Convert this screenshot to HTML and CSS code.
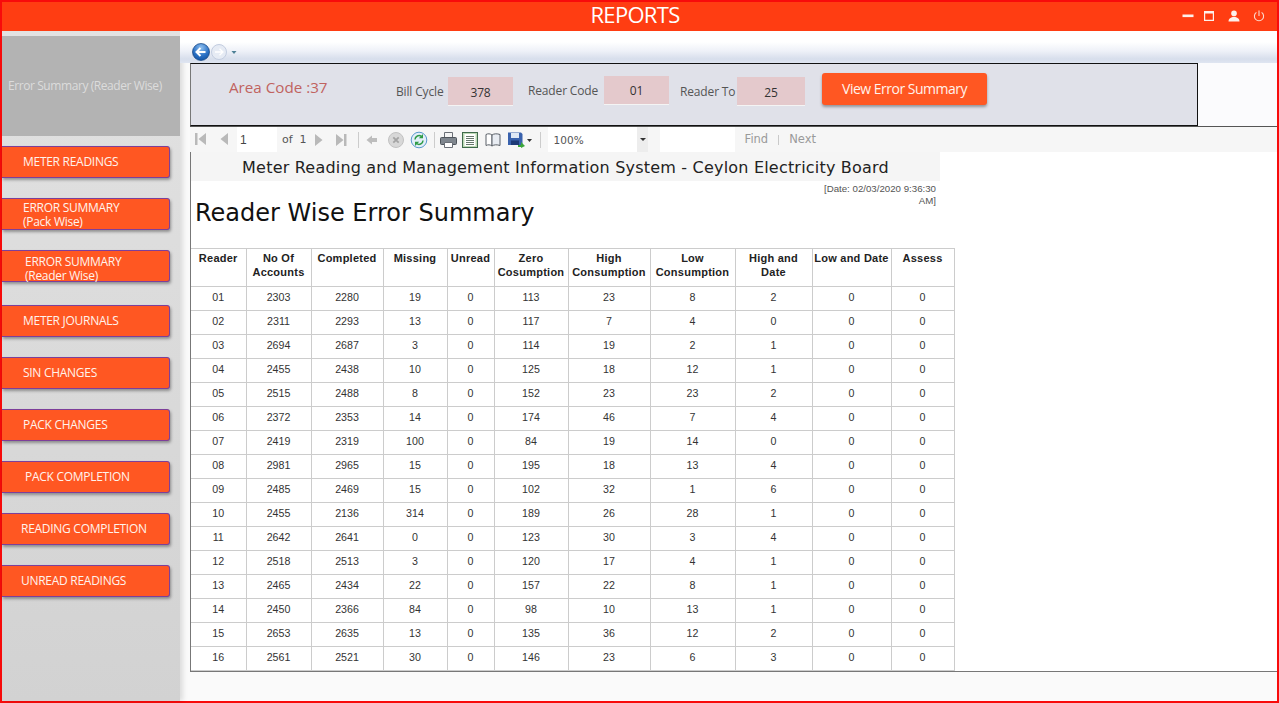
FILE: index.html
```html
<!DOCTYPE html>
<html>
<head>
    <title>Reports</title>
    <link rel="stylesheet" href="styles.css">
</head>
<body>
<div class="frame">
    <!-- Top bar -->
    <header class="topbar">
        <span class="topbar-title">REPORTS</span>
        <div class="window-icons">
            <svg width="12" height="12" viewBox="0 0 12 12"><rect x="0.500" y="4.500" width="11" height="2.600" fill="#fdf0ea"/></svg>
            <svg class="icon-max" width="12" height="12" viewBox="0 0 12 12"><path d="M1 1h10v10H1z M2.200 3.600v6.200h7.600V3.600z" fill="#fdf0ea" fill-rule="evenodd"/></svg>
            <svg width="12" height="12" viewBox="0 0 12 12"><circle cx="6" cy="3.400" r="2.800" fill="#fdf0ea"/><path d="M0.500 11.500c0-3 2.400-4.600 5.500-4.600s5.500 1.600 5.500 4.600z" fill="#fdf0ea"/></svg>
            <svg width="12" height="12" viewBox="0 0 12 12" fill="none" stroke="#fbd9cc" stroke-width="1.100"><path d="M3.400 2.400a4.600 4.600 0 1 0 5.200 0"/><path d="M6 0.500v5.500"/></svg>
        </div>
    </header>

    <div class="content">
        <!-- Left menu -->
        <aside class="sidebar">
            <div class="page-name">Error Summary (Reader Wise)</div>
            <nav class="menu">
                <a class="menu-btn">METER READINGS</a>
                <a class="menu-btn menu-two">ERROR SUMMARY<br>(Pack Wise)</a>
                <a class="menu-btn menu-two menu-low shift-2">ERROR SUMMARY<br>(Reader Wise)</a>
                <a class="menu-btn menu-journal">METER JOURNALS</a>
                <a class="menu-btn">SIN CHANGES</a>
                <a class="menu-btn">PACK CHANGES</a>
                <a class="menu-btn shift-2">PACK COMPLETION</a>
                <a class="menu-btn shift-n2">READING COMPLETION</a>
                <a class="menu-btn shift-n2">UNREAD READINGS</a>
            </nav>
        </aside>

        <main class="main">
            <!-- Browser style back / forward -->
            <div class="navbar">
                <svg width="46" height="20" viewBox="0 0 46 20">
                    <defs>
                        <radialGradient id="backFill" cx="50%" cy="25%" r="80%">
                            <stop offset="0" stop-color="#8fc0ef"/>
                            <stop offset="0.6" stop-color="#2a70c4"/>
                            <stop offset="1" stop-color="#0f4f9e"/>
                        </radialGradient>
                    </defs>
                    <circle cx="27" cy="10" r="7.500" fill="#e6ebf4" stroke="#c3cde0"/>
                    <path d="M23 10h8M27.500 6.800L31 10l-3.500 3.200" fill="none" stroke="#fff" stroke-width="1.300"/>
                    <circle cx="9" cy="10" r="8.500" fill="url(#backFill)" stroke="#12427f" stroke-width="0.700"/>
                    <path d="M4.500 10h9M8.500 6L4.500 10l4 4" fill="none" stroke="#fff" stroke-width="2"/>
                    <path d="M39.500 9h5l-2.500 3z" fill="#4d8096"/>
                </svg>
            </div>

            <!-- Filter panel -->
            <div class="filter-row">
                <form class="filter">
                    <span class="area-code">Area Code :37</span>
                    <label class="lbl lbl-bill">Bill Cycle</label>
                    <span class="box">378</span>
                    <label class="lbl lbl-code">Reader Code</label>
                    <span class="box box-code">01</span>
                    <label class="lbl lbl-to">Reader To</label>
                    <span class="box box-to">25</span>
                    <button type="button" class="view-btn">View Error Summary</button>
                </form>
            </div>

            <!-- Report viewer -->
            <div class="viewer">
                <div class="toolbar">
                    <svg class="tb-icons" width="160" height="16" viewBox="0 0 160 16">
                        <path d="M0 2h2.500v12H0zM11 2v12L3.500 8zM33 2v12L25.500 8z" fill="#b9b9b9"/>
                    </svg>
                    <input class="page-box" value="1">
                    <span class="of">of</span><span class="of-n">1</span>
                    <svg class="tb-next" width="36" height="16" viewBox="0 0 36 16">
                        <path d="M0 2v12l7.500-6zM21 2v12l7.500-6zM29 2h2.500v12H29z" fill="#b9b9b9"/>
                    </svg>
                    <i class="sep"></i>
                    <svg class="tb-arrow" width="12" height="12" viewBox="0 0 12 12"><path d="M0.500 6L6 1.500V4h5v4H6v2.500z" fill="#bdbdbd"/></svg>
                    <svg class="tb-stop" width="18" height="18" viewBox="0 0 18 18"><circle cx="9" cy="9" r="7.500" fill="#d8d8d8" stroke="#c2c2c2"/><path d="M6.300 6.300l5.400 5.400M11.700 6.300l-5.400 5.400" stroke="#a3a3a3" stroke-width="1.800"/></svg>
                    <svg class="tb-refresh" width="18" height="18" viewBox="0 0 18 18"><circle cx="9" cy="9" r="7.800" fill="#e2eef9" stroke="#5a98cc"/><path d="M5 8.500A4 4 0 0 1 11.500 5.500" fill="none" stroke="#2f9b46" stroke-width="1.500"/><path d="M13 3v4.200H8.800z" fill="#2f9b46"/><path d="M13 9.500A4 4 0 0 1 6.500 12.500" fill="none" stroke="#2f9b46" stroke-width="1.500"/><path d="M5 15v-4.200h4.200z" fill="#2f9b46"/></svg>
                    <i class="sep"></i>
                    <svg class="tb-print" width="17" height="16" viewBox="0 0 17 16"><path d="M4.500 0.500h8v5h-8z" fill="#f4f4f4" stroke="#6a6f76"/><rect x="0.500" y="5.500" width="16" height="7" rx="1" fill="#7f868e" stroke="#4f555c"/><path d="M4.500 10.500h8v5h-8z" fill="#fff" stroke="#6a6f76"/></svg>
                    <svg class="tb-page" width="16" height="16" viewBox="0 0 16 16"><rect x="0.500" y="0.500" width="15" height="15" fill="#bcd8b4" stroke="#3f6a4c"/><rect x="2.500" y="2" width="11" height="12" fill="#fff"/><path d="M4 4.500h8M4 6.500h8M4 8.500h8M4 10.500h8M4 12.500h8" stroke="#66786b"/></svg>
                    <svg class="tb-book" width="16" height="14" viewBox="0 0 16 14"><path d="M1 1.500c2-1 4-1 6 .5v11c-2-1.500-4-1.500-6-.5z" fill="#fff" stroke="#5b6168"/><path d="M7 2c2-1.500 5-1.500 8-.5v11c-3-1-6-1-8 .5z" fill="#e8ecf2" stroke="#5b6168"/></svg>
                    <svg class="tb-save" width="24" height="16" viewBox="0 0 24 16"><path d="M0 0.500h13l1.500 1.500v11H0z" fill="#3a62ad"/><rect x="3" y="1" width="8" height="5" fill="#dfe8f5"/><rect x="3" y="8.500" width="8" height="4.500" fill="#1d3a76"/><path d="M10 13h3v-3l4 4-4 2v-1h-3z" fill="#3ca63c"/><path d="M19 7h5l-2.500 3z" fill="#333"/></svg>
                    <i class="sep"></i>
                    <div class="zoom-box"><span>100%</span><b class="zoom-arrow"></b></div>
                    <input class="find-box">
                    <span class="find">Find</span><i class="find-sep"></i><span class="find">Next</span>
                </div>

                <div class="report">
                    <div class="report-head">Meter Reading and Management Information System - Ceylon Electricity Board</div>
                    <div class="report-date">[Date: 02/03/2020 9:36:30<br>AM]</div>
                    <h1 class="report-title">Reader Wise Error Summary</h1>

                    <table class="summary">
                        <colgroup>
                            <col class="c1"><col class="c2"><col class="c3"><col class="c4"><col class="c5"><col class="c6">
                            <col class="c7"><col class="c8"><col class="c9"><col class="c10"><col class="c11">
                        </colgroup>
                        <thead>
                            <tr>
                                <th>Reader</th>
                                <th>No Of Accounts</th>
                                <th>Completed</th>
                                <th>Missing</th>
                                <th>Unread</th>
                                <th>Zero Cosumption</th>
                                <th>High Consumption</th>
                                <th>Low Consumption</th>
                                <th>High and Date</th>
                                <th>Low and Date</th>
                                <th>Assess</th>
                            </tr>
                        </thead>
                        <tbody>
                            <tr><td>01</td><td>2303</td><td>2280</td><td>19</td><td>0</td><td>113</td><td>23</td><td>8</td><td>2</td><td>0</td><td>0</td></tr>
                            <tr><td>02</td><td>2311</td><td>2293</td><td>13</td><td>0</td><td>117</td><td>7</td><td>4</td><td>0</td><td>0</td><td>0</td></tr>
                            <tr><td>03</td><td>2694</td><td>2687</td><td>3</td><td>0</td><td>114</td><td>19</td><td>2</td><td>1</td><td>0</td><td>0</td></tr>
                            <tr><td>04</td><td>2455</td><td>2438</td><td>10</td><td>0</td><td>125</td><td>18</td><td>12</td><td>1</td><td>0</td><td>0</td></tr>
                            <tr><td>05</td><td>2515</td><td>2488</td><td>8</td><td>0</td><td>152</td><td>23</td><td>23</td><td>2</td><td>0</td><td>0</td></tr>
                            <tr><td>06</td><td>2372</td><td>2353</td><td>14</td><td>0</td><td>174</td><td>46</td><td>7</td><td>4</td><td>0</td><td>0</td></tr>
                            <tr><td>07</td><td>2419</td><td>2319</td><td>100</td><td>0</td><td>84</td><td>19</td><td>14</td><td>0</td><td>0</td><td>0</td></tr>
                            <tr><td>08</td><td>2981</td><td>2965</td><td>15</td><td>0</td><td>195</td><td>18</td><td>13</td><td>4</td><td>0</td><td>0</td></tr>
                            <tr><td>09</td><td>2485</td><td>2469</td><td>15</td><td>0</td><td>102</td><td>32</td><td>1</td><td>6</td><td>0</td><td>0</td></tr>
                            <tr><td>10</td><td>2455</td><td>2136</td><td>314</td><td>0</td><td>189</td><td>26</td><td>28</td><td>1</td><td>0</td><td>0</td></tr>
                            <tr><td>11</td><td>2642</td><td>2641</td><td>0</td><td>0</td><td>123</td><td>30</td><td>3</td><td>4</td><td>0</td><td>0</td></tr>
                            <tr><td>12</td><td>2518</td><td>2513</td><td>3</td><td>0</td><td>120</td><td>17</td><td>4</td><td>1</td><td>0</td><td>0</td></tr>
                            <tr><td>13</td><td>2465</td><td>2434</td><td>22</td><td>0</td><td>157</td><td>22</td><td>8</td><td>1</td><td>0</td><td>0</td></tr>
                            <tr><td>14</td><td>2450</td><td>2366</td><td>84</td><td>0</td><td>98</td><td>10</td><td>13</td><td>1</td><td>0</td><td>0</td></tr>
                            <tr><td>15</td><td>2653</td><td>2635</td><td>13</td><td>0</td><td>135</td><td>36</td><td>12</td><td>2</td><td>0</td><td>0</td></tr>
                            <tr><td>16</td><td>2561</td><td>2521</td><td>30</td><td>0</td><td>146</td><td>23</td><td>6</td><td>3</td><td>0</td><td>0</td></tr>
                        </tbody>
                    </table>
                </div>
            </div>
        </main>
    </div>
</div>
</body>
</html>
```

FILE: styles.css
```css
* {
    box-sizing: border-box;
}

html, body {
    margin: 0;
    height: 100%;
    overflow: hidden;
}

body {
    font-family: "Open Sans", sans-serif;
}

.frame {
    height: 703px;
    border: 2px solid #f80b0b;
    display: flex;
    flex-direction: column;
    background-color: #fafafa;
}

/* Top bar */
.topbar {
    height: 29px;
    flex: none;
    background-color: #ff3d12;
    display: flex;
    align-items: center;
    justify-content: center;
    position: relative;
}

.topbar-title {
    color: #fff;
    font-size: 22px;
    letter-spacing: -0.7px;
    margin: -6px 9px 0 0;
}

.window-icons {
    position: absolute;
    right: 12px;
    top: 8px;
    display: flex;
    gap: 13px;
}

.window-icons svg {
    display: block;
}

.window-icons .icon-max {
    margin-left: -4px;
}

.content {
    flex: 1;
    display: flex;
    min-height: 0;
}

/* Left menu */
.sidebar {
    width: 178px;
    flex: none;
    padding-top: 5px;
    background: linear-gradient(#e2e2e2, #d2d2d2);
    box-shadow: 3px 0 5px rgba(0, 0, 0, 0.12);
}

.page-name {
    height: 100px;
    background-color: #b3b3b3;
    color: #dcdcdc;
    font-size: 12px;
    letter-spacing: -0.42px;
    display: flex;
    align-items: center;
    padding-left: 6px;
    padding-bottom: 1px;
    white-space: nowrap;
}

.menu {
    display: flex;
    flex-direction: column;
    gap: 20px;
    padding-top: 10px;
}

.menu-btn {
    display: block;
    width: 168px;
    height: 32px;
    padding-left: 21px;
    background-color: #ff5722;
    border: 1px solid #7d3f9a;
    border-left: none;
    border-radius: 0 3px 3px 0;
    box-shadow: 1px 2px 3px rgba(0, 0, 0, 0.35);
    color: #fff3ec;
    font-size: 12px;
    letter-spacing: -0.28px;
    line-height: 30px;
    white-space: nowrap;
}

.menu-two {
    line-height: 14px;
    padding-top: 2px;
}

.menu-low {
    padding-top: 4px;
}

.menu-journal {
    margin-top: 3px;
}

.shift-2 {
    padding-left: 23px;
}

.shift-n2 {
    padding-left: 19px;
}

/* Main area */
.main {
    flex: 1;
    min-width: 0;
    display: flex;
    flex-direction: column;
    padding-left: 10px;
}

.navbar {
    height: 32px;
    flex: none;
    margin-left: -10px;
    padding: 11px 0 0 12px;
    background: linear-gradient(#fff 0, #fff 11px, #eef1f8 20px, #d7deec 28px, #dfe5f1 32px);
}

.navbar svg {
    display: block;
}

.filter-row {
    height: 63px;
    flex: none;
    background-color: #fbfbfd;
}

.filter {
    width: 1008px;
    height: 63px;
    padding-bottom: 8px;
    background-color: #e0e1e9;
    border: 1px solid #111;
    border-left-color: #777;
    display: flex;
    align-items: center;
    color: #555;
    font-size: 12px;
    letter-spacing: -0.15px;
}

.area-code {
    width: 167px;
    margin-top: -8px;
    padding-left: 38px;
    color: #c0635f;
    font-size: 15.2px;
    letter-spacing: 0;
    white-space: nowrap;
}

.lbl {
    white-space: nowrap;
}

.lbl-bill {
    margin-top: 1px;
    margin-left: 38px;
    width: 52px;
}

.lbl-code {
    margin-left: 15px;
    width: 76px;
}

.lbl-to {
    margin-left: 11px;
    width: 57px;
    margin-top: 1px;
}

.box {
    width: 65px;
    height: 29px;
    margin-top: 1px;
    background-color: #e4c9cc;
    border-bottom: 1px solid #f4f4f4;
    color: #333;
    font-size: 12px;
    text-align: center;
    line-height: 31px;
}

.box-code {
    margin-top: -1px;
    line-height: 29px;
}

.box-to {
    width: 68px;
}

.view-btn {
    width: 165px;
    height: 32px;
    margin: -4px 0 0 17px;
    padding: 0;
    background-color: #ff5722;
    border: none;
    border-radius: 3px;
    box-shadow: 0 2px 3px rgba(0, 0, 0, 0.35);
    color: #fff3ec;
    font-family: "Open Sans", sans-serif;
    font-size: 14px;
    letter-spacing: -0.5px;
}

/* Report viewer */
.viewer {
    flex: 1;
    min-height: 0;
    display: flex;
    flex-direction: column;
    border-top: 1px solid #555;
}

.toolbar {
    height: 25px;
    flex: none;
    display: flex;
    align-items: center;
    background-color: #f6f6f6;
    padding-left: 5px;
    position: relative;
}

.toolbar svg {
    flex: none;
}

.tb-icons {
    position: absolute;
    left: 5px;
    top: 4px;
}

.page-box {
    width: 40px;
    height: 25px;
    margin-left: 42px;
    border: none;
    outline: none;
    padding: 0 0 0 3px;
    background-color: #fff;
    color: #444;
    font-family: "Liberation Sans", sans-serif;
    font-size: 12px;
}

.of, .of-n {
    font-family: "DejaVu Sans", sans-serif;
    font-size: 11px;
    color: #555;
    margin-left: 5px;
}

.of-n {
    margin-left: 7px;
}

.tb-next {
    margin-left: 8px;
}

.sep {
    width: 1px;
    height: 16px;
    background-color: #ccc;
    flex: none;
}

.tb-next + .sep {
    margin-left: 7px;
}

.tb-arrow {
    margin-left: 7px;
}

.tb-stop {
    margin-left: 9px;
}

.tb-refresh {
    margin-left: 5px;
}

.tb-refresh + .sep {
    margin-left: 6px;
}

.tb-print {
    margin-left: 5px;
}

.tb-page {
    margin-left: 5px;
}

.tb-book {
    margin-left: 7px;
}

.tb-save {
    margin-left: 7px;
}

.tb-save + .sep {
    margin-left: 8px;
}

.zoom-box {
    width: 100px;
    height: 25px;
    margin-left: 7px;
    background-color: #fff;
    display: flex;
    align-items: center;
    justify-content: space-between;
    font-family: "DejaVu Sans", sans-serif;
    font-size: 10.5px;
    color: #555;
    padding-left: 6px;
}

.zoom-arrow {
    width: 11px;
    height: 25px;
    background-color: #ededed;
    position: relative;
}

.zoom-arrow::after {
    content: "";
    position: absolute;
    left: 3px;
    top: 11px;
    border: 3px solid transparent;
    border-top: 3px solid #333;
}

.find-box {
    width: 75px;
    height: 25px;
    margin-left: 12px;
    border: none;
    background-color: #fff;
}

.find {
    margin-top: -2px;
    font-family: "DejaVu Sans", sans-serif;
    font-size: 11.5px;
    color: #9a9a9a;
}

.find-box + .find {
    margin-left: 10px;
}

.find-sep {
    width: 1px;
    height: 10px;
    margin: 0 10px;
    background-color: #c9c9c9;
}

.report {
    flex: 1;
    min-height: 0;
    margin-bottom: 29px;
    background-color: #fff;
    border-left: 1px solid #777;
    border-bottom: 1px solid #777;
    font-family: "Liberation Sans", sans-serif;
}

.report-head {
    width: 749px;
    height: 29px;
    background-color: #f5f5f5;
    color: #222;
    font-family: "DejaVu Sans", sans-serif;
    font-size: 16px;
    letter-spacing: 0.2px;
    text-align: center;
    line-height: 32px;
}

.report-date {
    width: 745px;
    height: 19px;
    color: #555;
    font-size: 9.7px;
    line-height: 12px;
    text-align: right;
    padding-top: 2px;
}

.report-title {
    margin: 0;
    height: 48px;
    padding: 1px 0 0 4px;
    color: #111;
    font-family: "DejaVu Sans", sans-serif;
    font-size: 24px;
    font-weight: normal;
    line-height: 24px;
}

.summary {
    border-collapse: collapse;
    table-layout: fixed;
    width: 763px;
    color: #333;
    font-size: 10.67px;
}

.summary th,
.summary td {
    border: 1px solid #ccc;
    text-align: center;
    padding: 0 1px;
}

.summary th {
    height: 38px;
    padding-top: 2px;
    vertical-align: top;
    color: #222;
    font-size: 11px;
    line-height: 14px;
    letter-spacing: 0.25px;
}

.summary td {
    height: 24px;
    padding-bottom: 3px;
}

.summary tr > :first-child {
    border-left: none;
}

.c1 { width: 55px; }
.c2 { width: 65px; }
.c3 { width: 72px; }
.c4 { width: 64px; }
.c5 { width: 47px; }
.c6 { width: 74px; }
.c7 { width: 82px; }
.c8 { width: 85px; }
.c9 { width: 77px; }
.c10 { width: 79px; }
.c11 { width: 63px; }
```
